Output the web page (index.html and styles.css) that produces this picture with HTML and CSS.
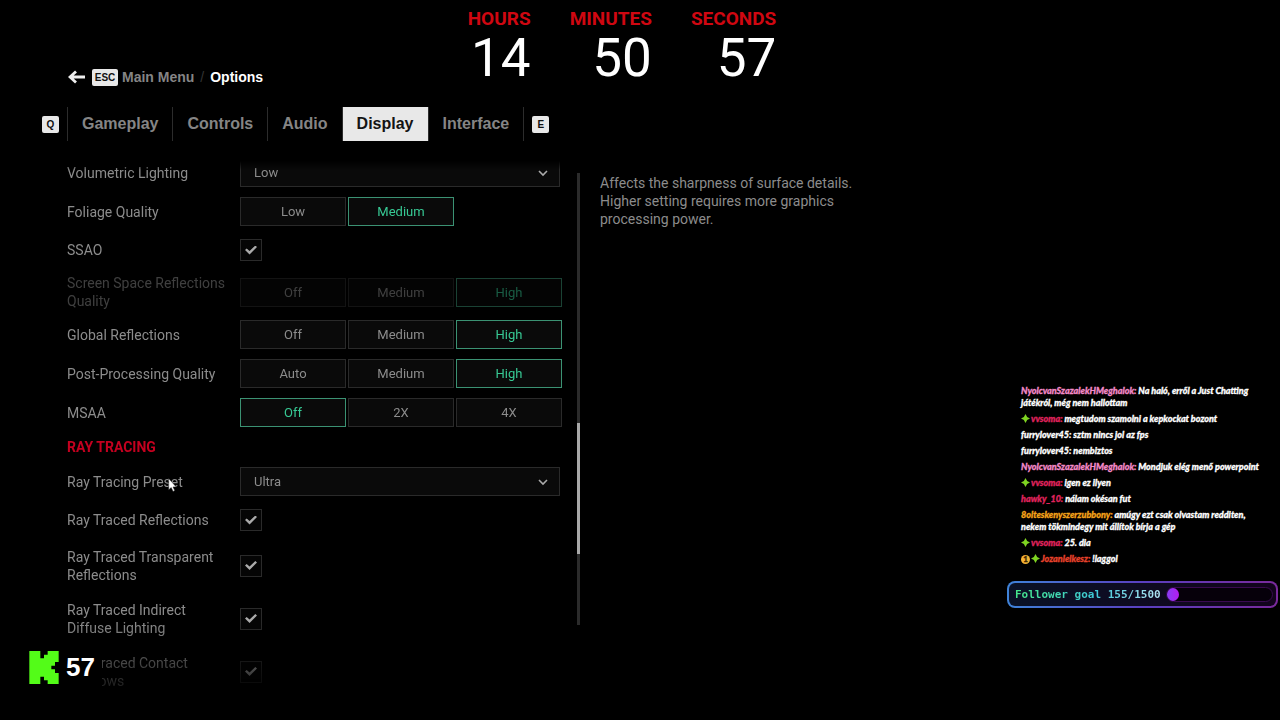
FILE: index.html
```html
<!DOCTYPE html>
<html lang="en">
<head>
    <meta charset="UTF-8">
    <meta name="viewport" content="width=device-width, initial-scale=1.0">
    <title>Options - Display</title>
    <link rel="stylesheet" href="styles.css">
</head>
<body>
    <main class="menu">
        <!-- Breadcrumb -->
        <nav class="breadcrumb" aria-label="Breadcrumb">
            <svg class="back-arrow" viewBox="0 0 17 14" aria-hidden="true">
                <path d="M8 1.500 2 7l6 5.500M2.500 7H17" fill="none" stroke="#eee" stroke-width="2.800"/>
            </svg>
            <kbd class="key key-wide">ESC</kbd>
            <a href="#">Main Menu</a>
            <span class="slash">/</span>
            <span class="current">Options</span>
        </nav>

        <!-- Tabs -->
        <nav class="tabs" aria-label="Options">
            <kbd class="key">Q</kbd>
            <div class="tab-list">
                <button class="tab">Gameplay</button>
                <button class="tab">Controls</button>
                <button class="tab">Audio</button>
                <button class="tab active">Display</button>
                <button class="tab">Interface</button>
            </div>
            <kbd class="key">E</kbd>
        </nav>

        <div class="content">
            <div class="settings">
                <div class="row">
                    <label for="volumetric">Volumetric Lighting</label>
                    <div class="dropdown">
                        <select id="volumetric"><option>Low</option></select>
                        <svg class="chevron" viewBox="0 0 10 7"><path d="M1 1l4 4 4-4"/></svg>
                    </div>
                </div>
                <div class="row">
                    <span class="name" id="foliage">Foliage Quality</span>
                    <div class="segments" role="group" aria-labelledby="foliage">
                        <button>Low</button>
                        <button class="selected">Medium</button>
                    </div>
                </div>
                <div class="row check-row">
                    <label for="ssao">SSAO</label>
                    <input type="checkbox" id="ssao" checked>
                </div>
                <div class="row disabled">
                    <span class="name" id="ssr">Screen Space Reflections Quality</span>
                    <div class="segments" role="group" aria-labelledby="ssr">
                        <button disabled>Off</button>
                        <button disabled>Medium</button>
                        <button class="selected" disabled>High</button>
                    </div>
                </div>
                <div class="row">
                    <span class="name" id="global">Global Reflections</span>
                    <div class="segments" role="group" aria-labelledby="global">
                        <button>Off</button>
                        <button>Medium</button>
                        <button class="selected">High</button>
                    </div>
                </div>
                <div class="row">
                    <span class="name" id="post">Post-Processing Quality</span>
                    <div class="segments" role="group" aria-labelledby="post">
                        <button>Auto</button>
                        <button>Medium</button>
                        <button class="selected">High</button>
                    </div>
                </div>
                <div class="row">
                    <span class="name" id="msaa">MSAA</span>
                    <div class="segments" role="group" aria-labelledby="msaa">
                        <button class="selected">Off</button>
                        <button>2X</button>
                        <button>4X</button>
                    </div>
                </div>

                <h2>RAY TRACING</h2>

                <div class="row">
                    <label for="preset">Ray Tracing Preset</label>
                    <div class="dropdown">
                        <select id="preset"><option>Ultra</option></select>
                        <svg class="chevron" viewBox="0 0 10 7"><path d="M1 1l4 4 4-4"/></svg>
                    </div>
                </div>
                <div class="row check-row">
                    <label for="rt-reflections">Ray Traced Reflections</label>
                    <input type="checkbox" id="rt-reflections" checked>
                </div>
                <div class="row check-row tall">
                    <label for="rt-transparent">Ray Traced Transparent Reflections</label>
                    <input type="checkbox" id="rt-transparent" checked>
                </div>
                <div class="row check-row tall">
                    <label for="rt-diffuse">Ray Traced Indirect Diffuse Lighting</label>
                    <input type="checkbox" id="rt-diffuse" checked>
                </div>
                <div class="row check-row tall">
                    <label for="rt-shadows">Ray Traced Contact Shadows</label>
                    <input type="checkbox" id="rt-shadows" checked>
                </div>
            </div>

            <div class="scrollbar"><div class="thumb"></div></div>

            <p class="description">Affects the sharpness of surface details. Higher setting requires more graphics processing power.</p>
        </div>
    </main>

    <!-- Stream overlays -->
    <div class="timer">
        <div class="unit"><span class="unit-name">HOURS</span><span class="digits">14</span></div>
        <div class="unit"><span class="unit-name">MINUTES</span><span class="digits">50</span></div>
        <div class="unit"><span class="unit-name">SECONDS</span><span class="digits">57</span></div>
    </div>

    <div class="viewers">
        <svg class="kick" viewBox="1.333 0 21.333 24" aria-hidden="true">
            <path fill="#53fc18" d="M1.333 0h8v5.333H12V2.667h2.667V0h8v8H20v2.667h-2.667v2.666H20V16h2.667v8h-8v-2.667H12v-2.666H9.333V24h-8Z"/>
        </svg>
        <span>57</span>
    </div>

    <svg width="0" height="0" class="symbols" aria-hidden="true">
        <symbol id="star" viewBox="0 0 10 10">
            <path fill="#7ed321" d="M5 0 6.800 3.200 10 5 6.800 6.800 5 10 3.200 6.800 0 5 3.200 3.200Z"/>
        </symbol>
    </svg>

    <aside class="stream">
        <ul class="chat">
            <li><b class="pink">NyolcvanSzazalekHMeghalok:</b> Na haló, erről a Just Chatting játékról, még nem hallottam</li>
            <li><svg class="badge"><use href="#star"/></svg><b class="crimson">vvsoma:</b> megtudom szamolni a kepkockat bozont</li>
            <li><b>furrylover45:</b> sztm nincs jol az fps</li>
            <li><b>furrylover45:</b> nembiztos</li>
            <li><b class="pink">NyolcvanSzazalekHMeghalok:</b> Mondjuk elég menő powerpoint</li>
            <li><svg class="badge"><use href="#star"/></svg><b class="crimson">vvsoma:</b> igen ez ilyen</li>
            <li><b class="crimson">hawky_10:</b> nálam okésan fut</li>
            <li><b class="orange">8olteskenyszerzubbony:</b> amúgy ezt csak olvastam redditen, nekem tökmindegy mit állítok bírja a gép</li>
            <li><svg class="badge"><use href="#star"/></svg><b class="crimson">vvsoma:</b> 25. dia</li>
            <li><span class="coin">1</span><svg class="badge"><use href="#star"/></svg><b class="red">Jozanlelkesz:</b> !laggol</li>
        </ul>
        <div class="goal">
            <span class="goal-text">Follower goal 155/1500</span>
            <div class="goal-track"><div class="goal-fill"></div></div>
        </div>
    </aside>

    <svg class="cursor" viewBox="0 0 8 13" aria-hidden="true">
        <path d="M.500.500v10.500l2.300-2.100 1.700 3.600 1.600-.8-1.600-3.400h3Z" fill="#fff" stroke="#222" stroke-width=".5"/>
    </svg>
</body>
</html>
```
FILE: styles.css
```css
* {
    box-sizing: border-box;
}
body {
    margin: 0;
    min-height: 100vh;
    background-color: #000;
    color: #8c8c8c;
    font-family: "Liberation Sans", Arial, sans-serif;
    font-size: 14px;
    line-height: 18px;
    overflow: hidden;
}
button,
select {
    font-family: inherit;
    color: inherit;
}

/* Menu header */
.menu {
    padding: 68px 42px 0;
}
.breadcrumb {
    display: flex;
    align-items: center;
    gap: 4px;
    margin-left: 26px;
    font-weight: bold;
}
.breadcrumb a {
    color: #858585;
    text-decoration: none;
}
.back-arrow {
    width: 17px;
    height: 14px;
    margin-right: 3px;
}
.slash {
    margin: 0 2px;
    color: #333;
    font-weight: normal;
}
.current {
    color: #fff;
}
.key {
    width: 17px;
    height: 17px;
    border-radius: 2px;
    background-color: #e8e8e8;
    color: #111;
    font-family: inherit;
    font-size: 10px;
    font-weight: bold;
    line-height: 18px;
    text-align: center;
}
.key-wide {
    width: 26px;
}
.tabs {
    display: flex;
    align-items: center;
    gap: 8px;
    margin-top: 21px;
}
.tab-list {
    display: flex;
    border-left: 1px solid #2c2c2c;
}
.tab {
    height: 34px;
    padding: 0 14px;
    border: none;
    border-right: 1px solid #2c2c2c;
    background: none;
    color: #858585;
    font-size: 16px;
    font-weight: bold;
    cursor: pointer;
}
.tab.active {
    background-color: #e8e8e8;
    color: #141414;
}

/* Settings */
.content {
    display: grid;
    grid-template-columns: minmax(0, 495px) 3px minmax(0, 258px);
    column-gap: 15px;
    margin: 17px 0 0 25px;
    font-family: Roboto, sans-serif;
}
.settings {
    display: flex;
    flex-direction: column;
    gap: 10px;
    -webkit-mask-image: linear-gradient(transparent 3px, #000 12px, #000 464px, transparent 546px);
    mask-image: linear-gradient(transparent 3px, #000 12px, #000 464px, transparent 546px);
}
.row {
    display: grid;
    grid-template-columns: 173px 1fr;
    align-items: center;
    min-height: 29px;
}
.check-row {
    min-height: 28px;
}
.tall {
    min-height: 43px;
}
.row label,
.name {
    padding-right: 8px;
}
.disabled {
    opacity: 0.45;
}
.settings h2 {
    margin: 0;
    color: #c4001f;
    font-size: 14px;
    line-height: 20px;
}
.segments {
    display: grid;
    grid-template-columns: repeat(3, 1fr);
    gap: 2px;
}
.segments button {
    height: 29px;
    padding: 0;
    border: 1px solid #2a2a2a;
    background-color: #0a0a0a;
    font-size: 13px;
}
.segments .selected {
    border-color: #3b9273;
    color: #37c994;
}
.dropdown {
    position: relative;
    margin-right: 2px;
}
.dropdown select {
    display: block;
    width: 100%;
    height: 29px;
    padding: 0 13px;
    border: 1px solid #2a2a2a;
    border-radius: 0;
    background-color: #0a0a0a;
    font-size: 13px;
    -webkit-appearance: none;
    appearance: none;
}
.chevron {
    position: absolute;
    top: 12px;
    right: 12px;
    width: 10px;
    height: 7px;
    fill: none;
    stroke: #aaa;
    stroke-width: 1.6;
    pointer-events: none;
}
input[type="checkbox"] {
    display: grid;
    place-items: center;
    width: 22px;
    height: 22px;
    margin: 0;
    border: 1px solid #2a2a2a;
    background-color: #050505;
    -webkit-appearance: none;
    appearance: none;
}
input[type="checkbox"]:checked::before {
    content: "";
    width: 12px;
    height: 9px;
    background-color: #aaa;
    clip-path: polygon(0 50%, 14% 32%, 38% 62%, 86% 0, 100% 18%, 38% 100%);
}
.scrollbar {
    display: flow-root;
    height: 452px;
    margin-top: 15px;
    background-color: #2b2b2b;
}
.thumb {
    height: 131px;
    margin-top: 250px;
    background-color: #a8a8a8;
}
.description {
    margin: 16px 0 0 5px;
}

/* Countdown */
.timer {
    position: absolute;
    top: 8px;
    left: 0;
    right: 0;
    display: flex;
    justify-content: center;
    gap: 39px;
    padding-right: 36px;
    font-family: Roboto, sans-serif;
    pointer-events: none;
}
.unit {
    display: flex;
    flex-direction: column;
    align-items: flex-end;
}
.unit-name {
    color: #cf0711;
    font-size: 19px;
    font-weight: bold;
    line-height: 22px;
}
.digits {
    color: #fff;
    font-size: 53px;
    line-height: 56px;
}

/* Viewer count */
.viewers {
    position: absolute;
    left: 24px;
    bottom: 32px;
    display: flex;
    align-items: center;
    gap: 7px;
    padding: 4px 7px 4px 5px;
    background-color: #000;
    color: #fff;
    font-size: 26px;
    font-weight: bold;
    line-height: 33px;
}
.kick {
    width: 30px;
    height: 33px;
}
.symbols {
    position: absolute;
}

/* Chat and follower goal */
.stream {
    position: absolute;
    top: 385px;
    right: 2px;
    width: 271px;
}
.chat {
    display: flex;
    flex-direction: column;
    gap: 4px;
    margin: 0 8px 0 14px;
    padding: 0;
    list-style: none;
    color: #fff;
    font-family: Lato, sans-serif;
    font-size: 9px;
    font-style: italic;
    font-weight: 900;
    line-height: 12px;
    -webkit-text-stroke: 0.3px currentColor;
}
.chat b {
    font-weight: 900;
    -webkit-text-stroke: 0.3px currentColor;
}
.pink {
    color: #f48ac8;
}
.crimson {
    color: #e0245e;
}
.orange {
    color: #f5a31a;
}
.red {
    color: #e8432c;
}
.badge {
    width: 9px;
    height: 9px;
    margin-right: 1px;
    vertical-align: -1px;
}
.coin {
    display: inline-block;
    width: 9px;
    height: 9px;
    margin-right: 1px;
    border-radius: 50%;
    background-color: #f5b335;
    color: #3a2500;
    font-size: 8px;
    font-style: normal;
    line-height: 9px;
    text-align: center;
}
.goal {
    display: flex;
    align-items: center;
    gap: 5px;
    height: 27px;
    margin-top: 16px;
    padding: 0 3px 0 6px;
    border: 2px solid transparent;
    border-radius: 8px;
    background: linear-gradient(90deg, #0a1226, #12031c) padding-box, linear-gradient(90deg, #3f83d8, #5a3fc0 50%, #7a2a9c) border-box;
}
.goal-text {
    background: linear-gradient(90deg, #46e88a, #3fc9d8 55%, #b4e4f4);
    -webkit-background-clip: text;
    background-clip: text;
    color: transparent;
    font-family: "DejaVu Sans Mono", monospace;
    font-size: 11px;
    font-weight: bold;
    white-space: nowrap;
}
.goal-track {
    flex: 1;
    height: 15px;
    border: 1px solid #3a0a50;
    border-radius: 8px;
    background-color: #06000a;
}
.goal-fill {
    width: 12px;
    height: 13px;
    border-radius: 50%;
    background: linear-gradient(90deg, #8a3df5, #b41cf0);
}

/* Mouse pointer */
.cursor {
    position: absolute;
    top: 478px;
    left: 168px;
    width: 9px;
    height: 14px;
}
```
